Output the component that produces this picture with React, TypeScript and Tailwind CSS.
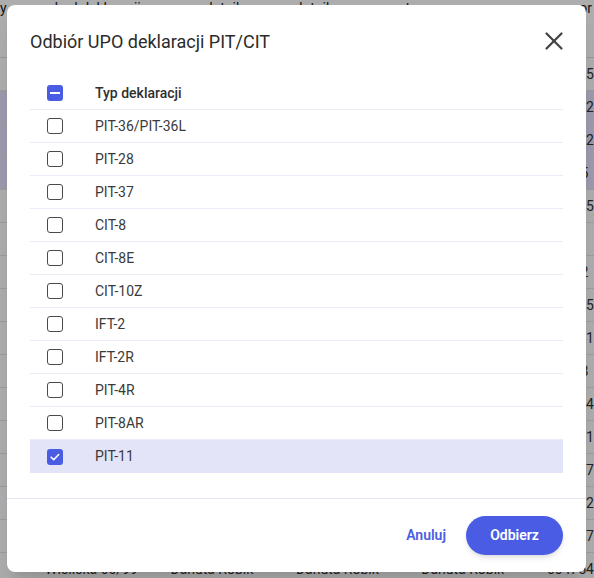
import { X } from 'lucide-react';

const types = [
  'PIT-36/PIT-36L',
  'PIT-28',
  'PIT-37',
  'CIT-8',
  'CIT-8E',
  'CIT-10Z',
  'IFT-2',
  'IFT-2R',
  'PIT-4R',
  'PIT-8AR',
  'PIT-11',
];

const bgNumbers = ['664755', '664752', '664752', '66475', '664735', '66471', '66472', '664725', '664741', '66478', '664754', '664731', '664747', '664752', '664747', '664754'];

function Checkbox({ state }: { state: 'off' | 'on' | 'mixed' }) {
  if (state === 'off') {
    return <span className="block w-4 h-4 rounded-[3px] border-[1.5px] border-[#4a4a4a] bg-white" />;
  }
  return (
    <span className="flex items-center justify-center w-4 h-4 rounded-[3px] bg-[#4b5ce4]">
      {state === 'mixed' ? (
        <span className="block w-[10px] h-[2px] bg-white" />
      ) : (
        <svg width="12" height="12" viewBox="0 0 12 12" fill="none">
          <path d="M2.2 6.2l2.5 2.5 5-5.2" stroke="white" strokeWidth="1.6" strokeLinecap="round" strokeLinejoin="round" />
        </svg>
      )}
    </span>
  );
}

function BackgroundTable() {
  return (
    <div className="absolute inset-0 bg-white text-[14px] text-[#333]">
      <div className="h-[58px] border-b border-[#ddd] flex justify-between pr-[2px] leading-4 text-[#222]">
        <span>y</span>
        <span>kod deklaracji</span>
        <span>podatnik</span>
        <span>płatnik</span>
        <span>wystawca</span>
        <span>numer</span>
        <span>or</span>
      </div>
      {bgNumbers.map((n, i) => (
        <div
          key={i}
          className={`h-[33px] border-b border-[#e6e6e6] flex items-center ${i >= 1 && i <= 3 ? 'bg-[#e6e4ff]' : ''}`}
        >
          <span className="w-[171px] pl-[45px]">Wielicka 60/99</span>
          <span className="w-[126px]">Danuta Robik</span>
          <span className="w-[126px]">Danuta Robik</span>
          <span className="w-[126px]">Danuta Robik</span>
          <span className="whitespace-nowrap">{n}</span>
        </div>
      ))}
    </div>
  );
}

export default function App() {
  return (
    <div className="relative w-[594px] h-[578px] overflow-hidden" style={{ fontFamily: 'Roboto, "Liberation Sans", sans-serif' }}>
      <BackgroundTable />
      <div className="absolute inset-0 bg-black/[0.32]" />

      <div className="absolute left-[7px] top-[5px] w-[579px] h-[567px] rounded-lg bg-white shadow-xl flex flex-col">
        <div className="h-[72px] flex items-center justify-between pl-[23px] pr-[17px]">
          <h2 className="text-[18px] text-[#2b2b2b]">Odbiór UPO deklaracji PIT/CIT</h2>
          <X size={30} strokeWidth={1.8} className="text-[#444]" />
        </div>

        <div className="mx-[23px]">
          <div className="h-[33px] flex items-center pl-[17px] gap-8 border-b border-[#ececf6]">
            <Checkbox state="mixed" />
            <span className="text-[14px] font-medium text-[#2f2f2f]">Typ deklaracji</span>
          </div>
          {types.map((t, i) => {
            const checked = t === 'PIT-11';
            return (
              <div
                key={t}
                className={`h-[33px] flex items-center pl-[17px] gap-8 ${checked ? 'bg-[#e3e4f8]' : ''} ${i < types.length - 1 ? 'border-b border-[#ececf6]' : ''}`}
              >
                <Checkbox state={checked ? 'on' : 'off'} />
                <span className="text-[14px] text-[#3a3a3a]">{t}</span>
              </div>
            );
          })}
        </div>

        <div className="mt-auto h-[74px] border-t border-[#e6e4f4] flex items-center justify-end gap-5 pr-[23px]">
          <button className="text-[14px] font-semibold text-[#4b5ce4]">Anuluj</button>
          <button className="h-[39px] w-[97px] rounded-full bg-[#4b5ce4] text-white text-[14px] font-semibold shadow-md">
            Odbierz
          </button>
        </div>
      </div>
    </div>
  );
}
